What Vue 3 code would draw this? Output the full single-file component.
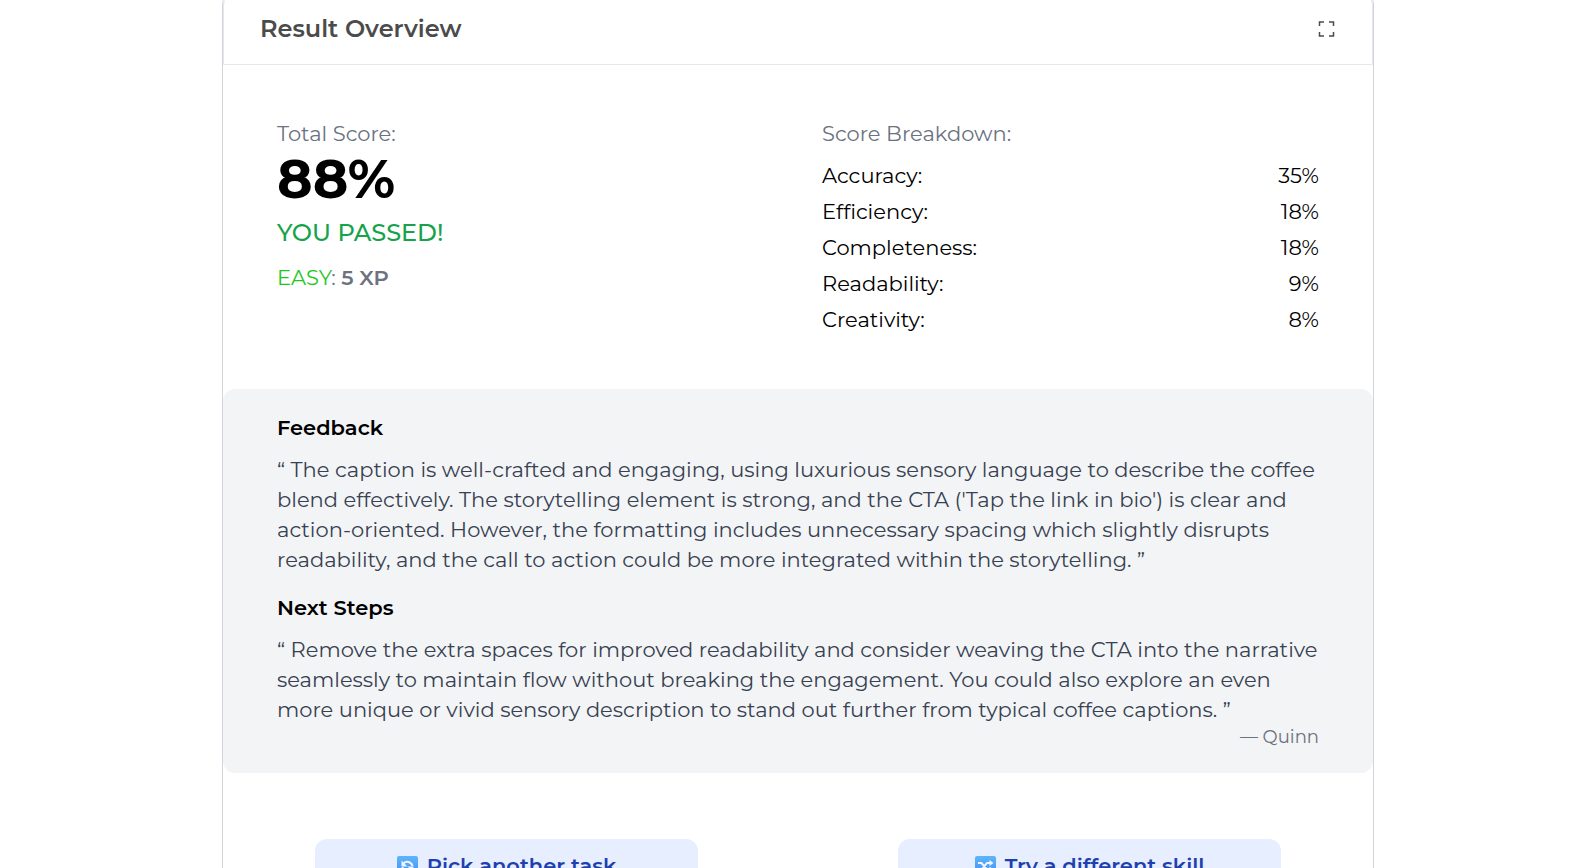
<script setup>
const scores = [
  { label: 'Accuracy:', value: '35%' },
  { label: 'Efficiency:', value: '18%' },
  { label: 'Completeness:', value: '18%' },
  { label: 'Readability:', value: '9%' },
  { label: 'Creativity:', value: '8%' },
]
</script>

<template>
  <main class="page">
    <article class="card">
      <header class="head">
        <h1>Result Overview</h1>
        <button class="expand" type="button" aria-label="Toggle full screen">
          <svg width="18" height="18" viewBox="0 0 18 18" fill="none" stroke="#4b4b4b" stroke-width="1.500">
            <path d="M6 2H1.500V6M11 2H15.500V6M1.500 12V16H6M15.500 12V16H11" />
          </svg>
        </button>
      </header>

      <section class="summary">
        <div>
          <p class="muted">Total Score:</p>
          <p class="total">88%</p>
          <p class="passed">YOU PASSED!</p>
          <p class="level"><span class="easy">EASY</span>: <strong>5 XP</strong></p>
        </div>
        <div>
          <p class="muted">Score Breakdown:</p>
          <dl class="scores">
            <div v-for="s in scores" :key="s.label" class="score">
              <dt>{{ s.label }}</dt>
              <dd>{{ s.value }}</dd>
            </div>
          </dl>
        </div>
      </section>

      <section class="feedback">
        <h2>Feedback</h2>
        <p class="quote">“ The caption is well-crafted and engaging, using luxurious sensory language to describe the coffee blend effectively. The storytelling element is strong, and the CTA ('Tap the link in bio') is clear and action-oriented. However, the formatting includes unnecessary spacing which slightly disrupts readability, and the call to action could be more integrated within the storytelling. ”</p>
        <h2>Next Steps</h2>
        <p class="quote last">“ Remove the extra spaces for improved readability and consider weaving the CTA into the narrative seamlessly to maintain flow without breaking the engagement. You could also explore an even more unique or vivid sensory description to stand out further from typical coffee captions. ”</p>
        <p class="author">— Quinn</p>
      </section>

      <footer class="actions">
        <button class="action" type="button">
          <svg class="icon" width="21" height="21" viewBox="0 0 21 21" fill="none" aria-hidden="true">
            <defs>
              <linearGradient id="tile-a" x1="0" y1="0" x2="0" y2="1">
                <stop offset="0" stop-color="#5eb5fb" />
                <stop offset="1" stop-color="#3d8df0" />
              </linearGradient>
            </defs>
            <rect width="21" height="21" rx="2" fill="url(#tile-a)" />
            <path d="M6.500 7.500C9 4.500 14.500 5.500 15.500 10M14.500 13.500C12 16.500 6.500 15.500 5.500 11" stroke="#f2f3ff" stroke-width="2" />
            <path d="M4.500 4.500V10.500H10.500ZM16.500 16.500V10.500H10.500Z" fill="#f2f3ff" />
          </svg>
          <span>Pick another task</span>
        </button>
        <button class="action" type="button">
          <svg class="icon" width="21" height="21" viewBox="0 0 21 21" fill="none" aria-hidden="true">
            <rect width="21" height="21" rx="2" fill="url(#tile-a)" />
            <path d="M3 7H6.500L12 13.500H15M3 13.500H6.500L12 7H15" stroke="#f2f3ff" stroke-width="2" />
            <path d="M14.500 4L18.500 7L14.500 10ZM14.500 10.500L18.500 13.500L14.500 16.500Z" fill="#f2f3ff" />
          </svg>
          <span>Try a different skill</span>
        </button>
      </footer>
    </article>
  </main>
</template>

<style>
body {
  margin: 0;
  background: #fff;
}
</style>

<style scoped>
.page {
  box-sizing: border-box;
  height: 100vh;
  overflow: hidden;
  padding: 0 211px 0 222px;
  font-family: Montserrat, Inter, sans-serif;
  font-size: 21px;
  line-height: 30px;
  color: #000;
}
h1, h2, p, dl, dd {
  margin: 0;
}
.card {
  margin-top: -8px;
  border: 1px solid #d1d5db;
  border-radius: 12px;
}
.head {
  display: flex;
  align-items: center;
  justify-content: space-between;
  padding: 20px 36px;
  border: 1px solid #e5e7eb;
  border-radius: 12px 12px 0 0;
}
h1 {
  font-size: 24px;
  line-height: 30px;
  font-weight: 600;
  color: #4b4b4b;
}
.expand {
  display: flex;
  padding: 0;
  border: 0;
  background: none;
}
.summary {
  display: grid;
  grid-template-columns: 1fr 1fr;
  gap: 48px;
  padding: 54px;
}
.muted {
  color: #6b7280;
}
.total {
  font-size: 54px;
  line-height: 60px;
  font-weight: 700;
}
.passed {
  font-size: 24px;
  line-height: 48px;
  font-weight: 500;
  color: #16a34a;
}
.level {
  line-height: 42px;
  color: #6b7280;
}
.level strong {
  font-weight: 600;
}
.easy {
  color: #1fc71f;
}
.scores {
  display: grid;
  gap: 6px;
  padding-top: 12px;
}
.score {
  display: flex;
  justify-content: space-between;
}
.feedback {
  padding: 24px 54px;
  border-radius: 12px;
  background: #f3f4f6;
}
h2 {
  margin-bottom: 12px;
  font-size: 21px;
  line-height: 30px;
  font-weight: 600;
}
.quote {
  margin-bottom: 18px;
  color: #374151;
}
.last {
  margin-bottom: 0;
}
.author {
  font-size: 18px;
  line-height: 24px;
  text-align: right;
  color: #6b7280;
}
.actions {
  display: flex;
  justify-content: space-around;
  gap: 16px;
  padding: 66px 0;
}
.action {
  box-sizing: border-box;
  display: flex;
  align-items: center;
  justify-content: center;
  gap: 9px;
  width: 33.333%;
  padding: 12px;
  border: 0;
  border-radius: 12px;
  background: #e6eeff;
  font: inherit;
  font-weight: 600;
  color: #1e40af;
}
</style>
